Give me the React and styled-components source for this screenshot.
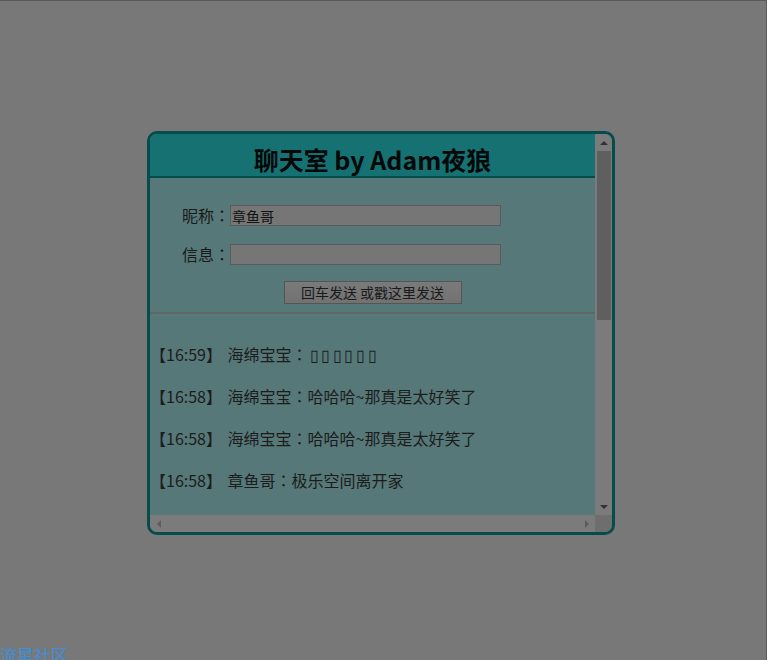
import React from "react";
import styled, { createGlobalStyle, css } from "styled-components";

const GlobalStyle = createGlobalStyle`
  html, body {
    margin: 0;
    padding: 0;
    overflow: hidden;
    background: #787878;
  }
  body {
    font-family: "Noto Sans CJK SC", "Noto Sans", sans-serif;
  }
`;

const messages = [
  { time: "16:59", name: "海绵宝宝", text: "▯▯▯▯▯▯", boxes: true },
  { time: "16:58", name: "海绵宝宝", text: "哈哈哈~那真是太好笑了" },
  { time: "16:58", name: "海绵宝宝", text: "哈哈哈~那真是太好笑了" },
  { time: "16:58", name: "章鱼哥", text: "极乐空间离开家" },
  { time: "16:57", name: "派大星", text: "我们去抓水母吧" },
  { time: "16:57", name: "海绵宝宝", text: "好啊好啊" },
  { time: "16:56", name: "章鱼哥", text: "别来烦我" },
  { time: "16:56", name: "派大星", text: "章鱼哥在吹竖笛" },
  { time: "16:55", name: "海绵宝宝", text: "早上好，比奇堡" },
  { time: "16:55", name: "蟹老板", text: "钱钱钱" },
  { time: "16:54", name: "章鱼哥", text: "又是无聊的一天" },
  { time: "16:54", name: "海绵宝宝", text: "我准备好了" },
];

export default function App() {
  return (
    <>
      <GlobalStyle />
      <Screen>
        <ChatBox>
          <Frame>
            <Viewport>
              <Header>聊天室 by Adam夜狼</Header>
              <Form>
                <Row>
                  <Label>
                    昵称<Colon>：</Colon>
                  </Label>
                  <Input defaultValue="章鱼哥" />
                </Row>
                <Row>
                  <Label>
                    信息<Colon>：</Colon>
                  </Label>
                  <Input defaultValue="" />
                </Row>
                <SendRow>
                  <SendButton>回车发送 或戳这里发送</SendButton>
                </SendRow>
              </Form>
              <Divider />
              <MessageList>
                {messages.map((m, i) => (
                  <Message key={i}>
                    【{m.time}】 <Name>{m.name}</Name>
                    <Colon>：</Colon>
                    <Body $boxes={m.boxes}>{m.text}</Body>
                  </Message>
                ))}
              </MessageList>
            </Viewport>
            <VBar>
              <ArrowButton dir="up" />
              <Track>
                <Thumb />
              </Track>
              <ArrowButton dir="down" />
            </VBar>
            <HBar>
              <ArrowButton dir="left" disabled />
              <HTrack />
              <ArrowButton dir="right" disabled />
            </HBar>
            <Corner />
          </Frame>
        </ChatBox>
        <Footer>流星社区</Footer>
      </Screen>
    </>
  );
}

const Screen = styled.div`
  width: 767px;
  height: 660px;
  box-sizing: border-box;
  padding-top: 130px;
  border-top: 1px solid #5a5a5a;
  border-right: 1px solid #5a5a5a;
  display: flex;
  flex-direction: column;
  align-items: flex-start;
  overflow: hidden;
`;

const ChatBox = styled.div`
  flex: none;
  margin-left: 147px;
  width: 468px;
  height: 404px;
  box-sizing: border-box;
  border: 3px solid #064c4c;
  border-radius: 10px;
  overflow: hidden;
  background: #567878;
`;

const Frame = styled.div`
  display: grid;
  grid-template-columns: 445px 17px;
  grid-template-rows: 381px 17px;
  width: 100%;
  height: 100%;
`;

const Viewport = styled.div`
  overflow: hidden;
  background: #567878;
  color: #1a1a1a;
`;

const Header = styled.h1`
  margin: 0;
  box-sizing: content-box;
  height: 33px;
  padding-top: 9px;
  line-height: 33px;
  background: #167272;
  border-bottom: 2px solid #064c4c;
  text-align: center;
  white-space: nowrap;
  font-size: 25px;
  font-weight: bold;
  color: #050808;
`;

const Form = styled.div`
  padding: 27px 0 0 32px;
  display: flex;
  flex-direction: column;
  gap: 18px;
`;

const Row = styled.div`
  display: flex;
  align-items: center;
  height: 21px;
`;

const Label = styled.span`
  flex: none;
  width: 48px;
  white-space: nowrap;
  font-size: 16px;
  line-height: 21px;
  color: #1a1a1a;
`;

const Colon = styled.span`
  font-family: "Noto Sans CJK TC", "Noto Sans CJK SC", sans-serif;
`;

const Name = styled.span``;

const Body = styled.span`
  letter-spacing: ${(p) => (p.$boxes ? "2.6px" : "0")};
  margin-left: ${(p) => (p.$boxes ? "2px" : "0")};
`;

const Input = styled.input`
  flex: none;
  width: 271px;
  height: 21px;
  box-sizing: border-box;
  margin: 0;
  padding: 0 1px;
  border: 1px solid #5a5a5a;
  background: #767676;
  font-family: "Noto Sans CJK SC", sans-serif;
  font-size: 14px;
  color: #111;
  outline: none;
`;

const SendRow = styled.div`
  display: flex;
  justify-content: center;
  margin-left: -32px;
  margin-top: -2px;
`;

const SendButton = styled.button`
  width: 178px;
  height: 23px;
  margin: 0;
  padding: 0;
  border: 1px solid #555;
  background: linear-gradient(#7a7a7a, #727272);
  font-family: "Noto Sans CJK SC", sans-serif;
  font-size: 14px;
  line-height: 21px;
  color: #1a1a1a;
`;

const Divider = styled.div`
  margin-top: 8px;
  height: 2px;
  background: #5e6666;
`;

const MessageList = styled.div`
  padding-top: 27px;
`;

const Message = styled.p`
  margin: 0 0 16px;
  font-size: 16px;
  line-height: 26px;
  white-space: nowrap;
  color: #1c1c1c;
  ${Name} {
    margin-left: 2px;
  }
`;

const barBase = css`
  background: #7b7b7b;
  display: flex;
`;

const VBar = styled.div`
  ${barBase};
  flex-direction: column;
`;

const HBar = styled.div`
  ${barBase};
  flex-direction: row;
`;

const Track = styled.div`
  flex: 1;
  display: flex;
  flex-direction: column;
`;

const HTrack = styled.div`
  flex: 1;
`;

const Thumb = styled.div`
  height: 169px;
  margin: 0 1px 0 2px;
  background: #5f5f5f;
`;

const Corner = styled.div`
  background: #6e6e6e;
`;

const arrowShapes = {
  up: (c) => css`
    border-left: 4px solid transparent;
    border-right: 4px solid transparent;
    border-bottom: 4px solid ${c};
  `,
  down: (c) => css`
    border-left: 4px solid transparent;
    border-right: 4px solid transparent;
    border-top: 4px solid ${c};
  `,
  left: (c) => css`
    border-top: 4px solid transparent;
    border-bottom: 4px solid transparent;
    border-right: 4px solid ${c};
  `,
  right: (c) => css`
    border-top: 4px solid transparent;
    border-bottom: 4px solid transparent;
    border-left: 4px solid ${c};
  `,
};

const ArrowButton = styled.div`
  width: 17px;
  height: 17px;
  flex: none;
  display: flex;
  align-items: center;
  justify-content: center;
  &::before {
    content: "";
    width: 0;
    height: 0;
    ${(p) => arrowShapes[p.dir](p.disabled ? "#5c5c5c" : "#333")};
  }
`;

const Footer = styled.div`
  flex: none;
  margin-top: 108px;
  font-size: 17px;
  line-height: 23px;
  color: #3d8fdc;
`;
